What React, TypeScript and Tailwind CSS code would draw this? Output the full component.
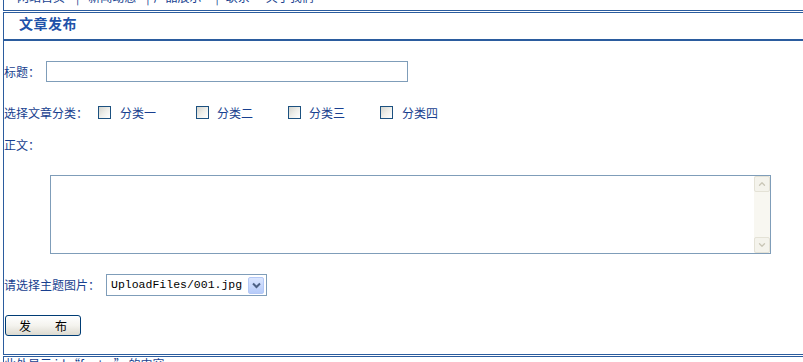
import { ChevronDown, ChevronUp } from 'lucide-react';

const categories = [
  { name: '分类一', box: 'ml-[10px]', label: 'ml-[9px]' },
  { name: '分类二', box: 'ml-[40px]', label: 'ml-[8px]' },
  { name: '分类三', box: 'ml-[35px]', label: 'ml-[8px]' },
  { name: '分类四', box: 'ml-[35px]', label: 'ml-[9px]' },
];

function Checkbox({ className }: { className: string }) {
  return (
    <span
      className={`${className} block h-[13px] w-[13px] shrink-0 border border-[#1c5180] bg-gradient-to-br from-[#d4d4cd] via-[#eeeeea] to-white`}
    />
  );
}

function ScrollButton({ up }: { up?: boolean }) {
  return (
    <div className="flex h-[16px] w-[16px] items-center justify-center rounded-[2px] border border-[#e4e2d6] bg-[#f4f3ec]">
      {up ? (
        <ChevronUp className="h-[10px] w-[10px] text-[#c9c6b6]" strokeWidth={3} />
      ) : (
        <ChevronDown className="h-[10px] w-[10px] text-[#c9c6b6]" strokeWidth={3} />
      )}
    </div>
  );
}

export default function App() {
  return (
    <div className="h-screen overflow-hidden bg-white pl-[3px] text-[12px] leading-[14px] text-[#183f8f] [font-family:'Noto_Sans_CJK_SC','Liberation_Sans',sans-serif]">
      {/* nav bar, only its bottom edge shows */}
      <div className="h-[11px] overflow-hidden border-b border-l border-[#2b5c9e]">
        <div className="-mt-[10px] flex whitespace-nowrap pl-[13px]">
          <span>网站首页</span>
          <span className="ml-[11px]">|</span>
          <span className="ml-[9px]">新闻动态</span>
          <span className="ml-[10px]">|</span>
          <span className="ml-[4px]">产品展示</span>
          <span className="ml-[14px]">|</span>
          <span className="ml-[7px]">联系</span>
          <span className="ml-[16px]">关于我们</span>
        </div>
      </div>

      <div className="mt-px h-[343px] border-y border-l border-[#2b5c9e]">
        <div className="h-[28px] border-b-2 border-[#2b5c9e] pl-[15px] pt-[3px] text-[14px] font-bold tracking-[0.5px] text-[#2152a9]">
          文章发布
        </div>

        <div className="mt-[20px] flex h-[21px] items-center">
          <span>标题：</span>
          <input className="ml-[6px] h-[21px] w-[362px] border border-[#7f9db9] bg-white outline-none" />
        </div>

        <div className="mt-[24px] flex h-[13px] items-center whitespace-nowrap">
          <span>选择文章分类：</span>
          {categories.map((c) => (
            <div key={c.name} className="flex items-center">
              <Checkbox className={c.box} />
              <span className={c.label}>{c.name}</span>
            </div>
          ))}
        </div>

        <div className="mt-[19px] h-[14px]">正文：</div>

        <div className="ml-[46px] mt-[23px] flex h-[79px] w-[721px] border border-[#7f9db9]">
          <textarea className="flex-1 resize-none bg-white outline-none" />
          <div className="flex w-[16px] flex-col justify-between bg-[#f8f7f1]">
            <ScrollButton up />
            <ScrollButton />
          </div>
        </div>

        <div className="mt-[20px] flex h-[22px] items-center">
          <span>请选择主题图片：</span>
          <div className="ml-[6px] flex h-[22px] w-[161px] items-center border border-[#7f9db9] bg-white">
            <span className="pl-[4px] text-[11.5px] text-black [font-family:'Liberation_Mono',monospace]">
              UploadFiles/001.jpg
            </span>
            <div className="ml-auto mr-[2px] flex h-[17px] w-[16px] items-center justify-center rounded-[2px] border border-[#b4c8f6] bg-gradient-to-b from-[#dbe6ff] to-[#b6cbf9]">
              <svg width="9" height="7" viewBox="0 0 9 7">
                <path d="M1 1.5 L4.5 5 L8 1.5" fill="none" stroke="#4d6185" strokeWidth="2" />
              </svg>
            </div>
          </div>
        </div>

        <button className="ml-[1px] mt-[19px] flex h-[21px] w-[76px] items-center justify-center rounded-[3px] border border-[#003c74] bg-gradient-to-b from-white via-[#f4f3ee] to-[#dcdad0] text-black">
          发　　布
        </button>
      </div>

      <div className="mt-px h-[20px] border-l border-t border-[#2b5c9e]">
        此处显示 id “footer” 的内容
      </div>
    </div>
  );
}
